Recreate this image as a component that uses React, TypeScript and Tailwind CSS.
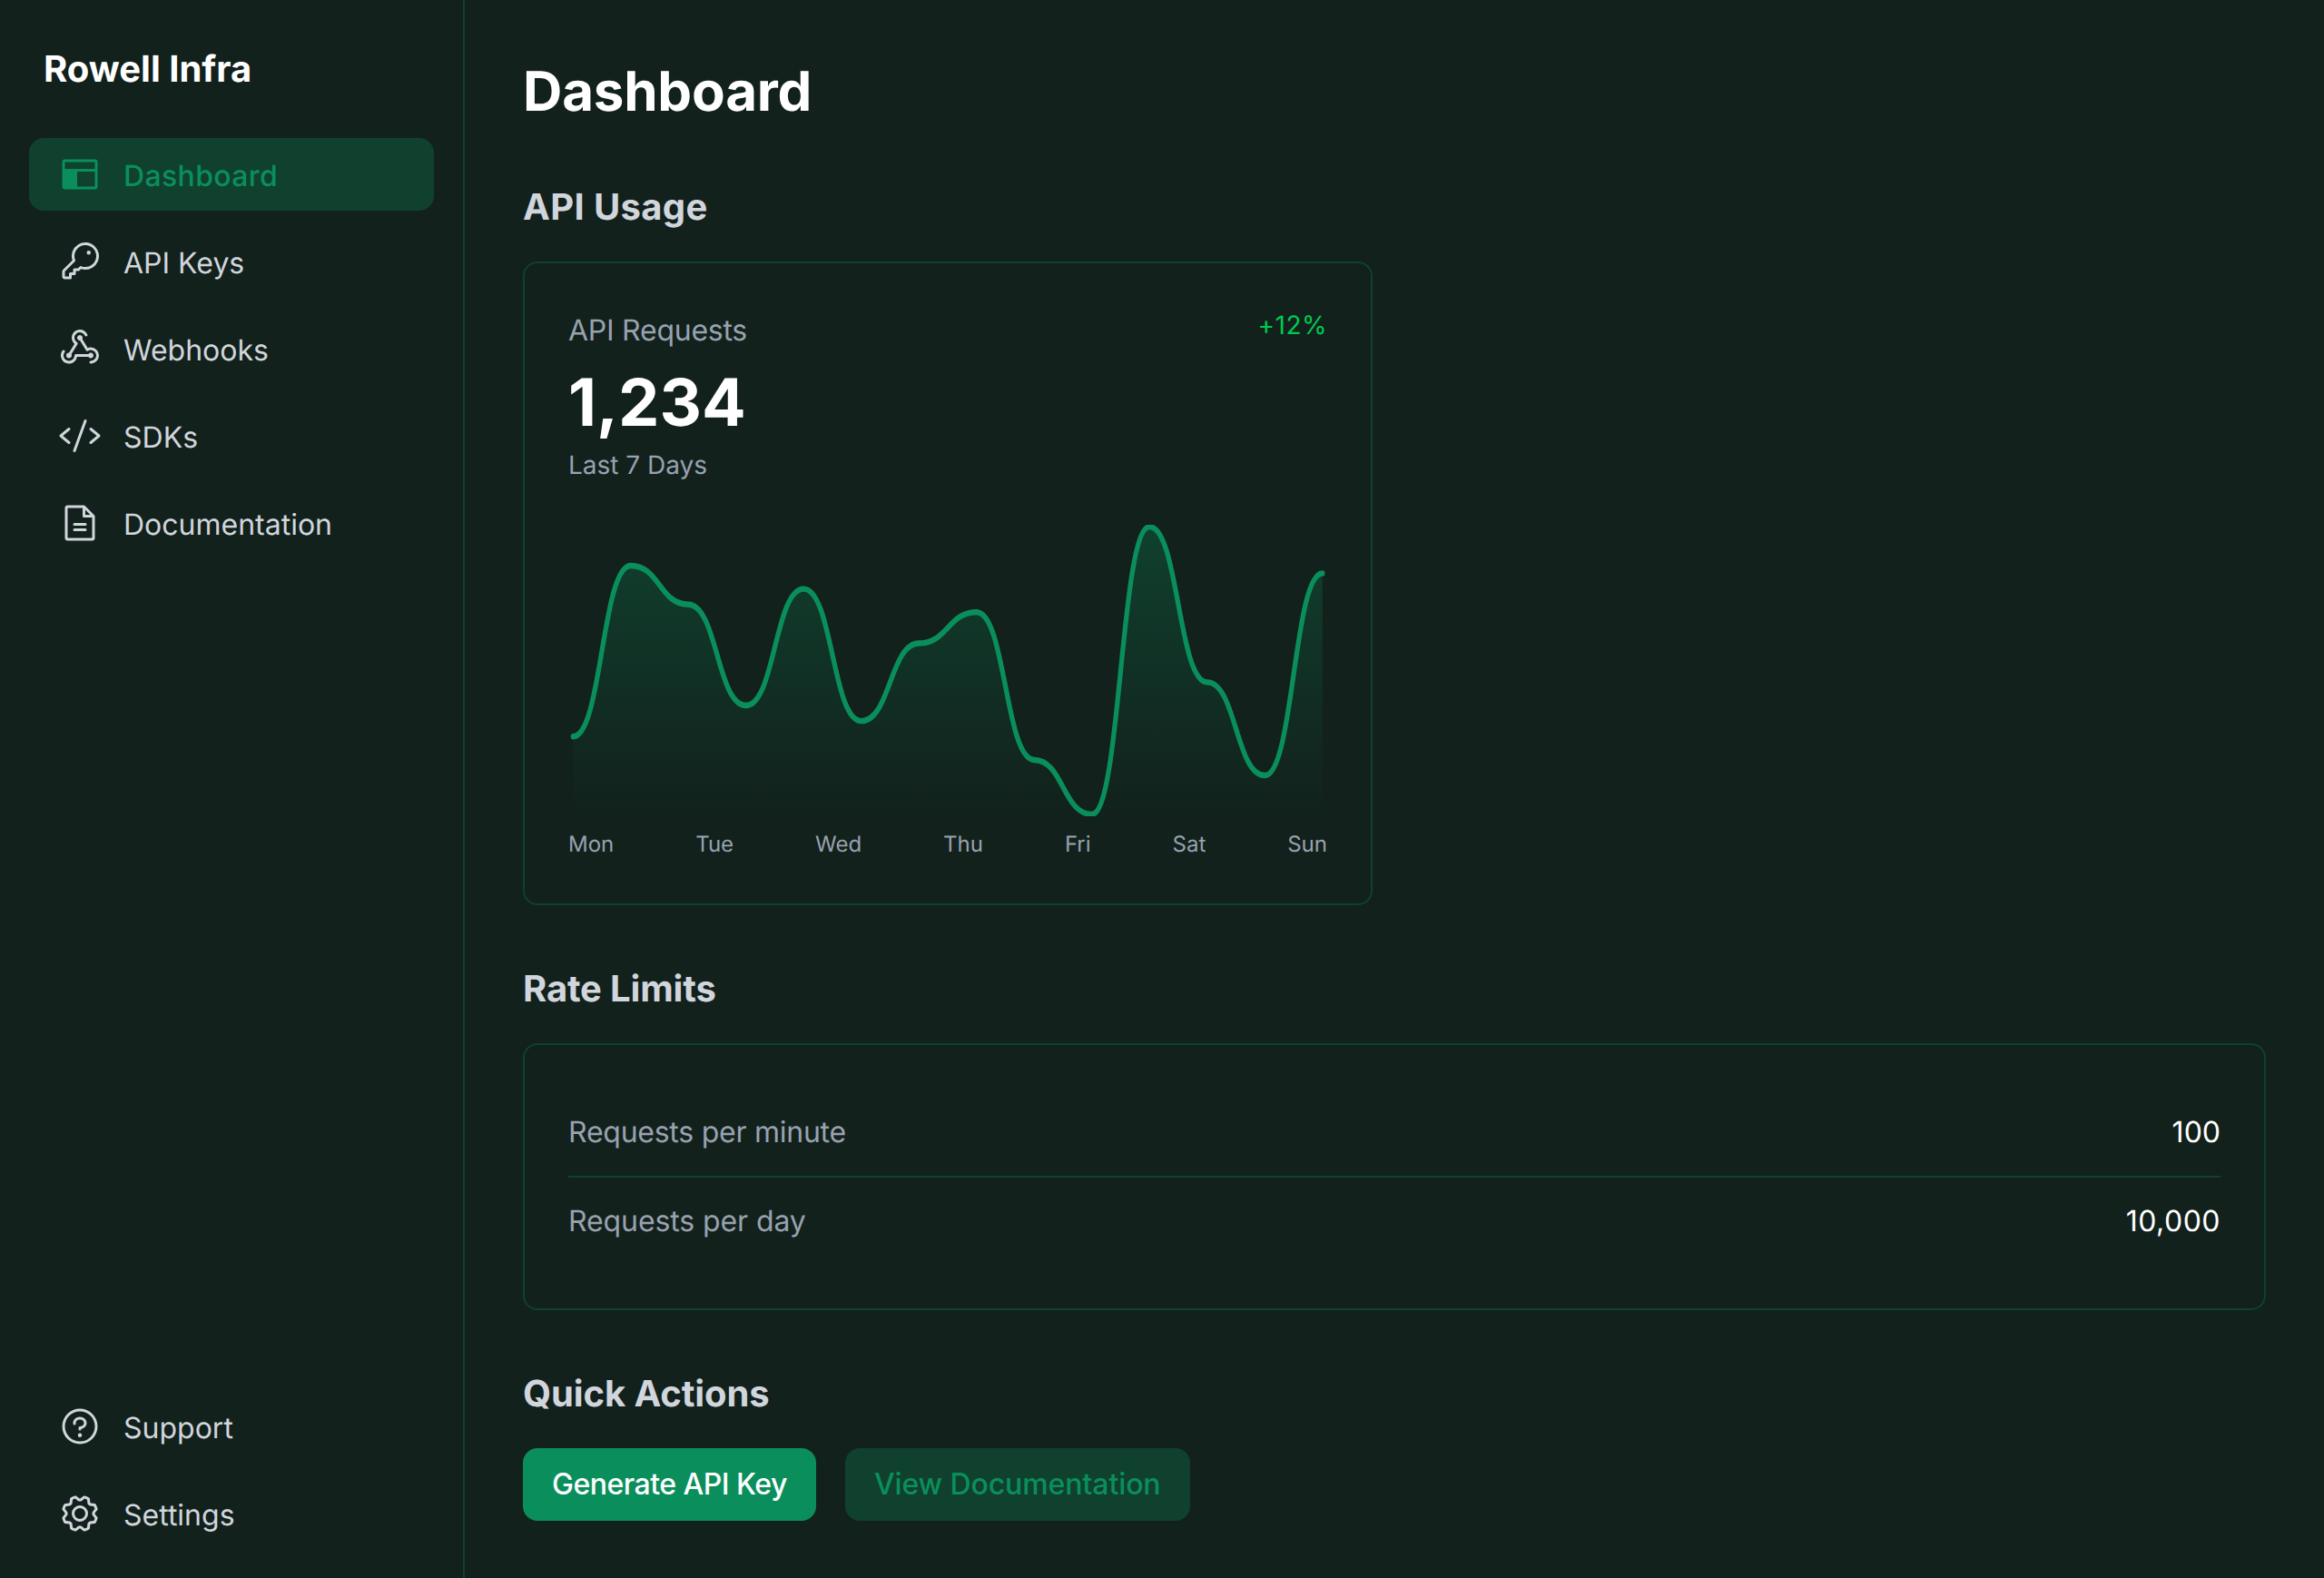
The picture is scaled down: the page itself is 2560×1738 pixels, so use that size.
import {
  PiLayoutFill,
  PiKey,
  PiWebhooksLogo,
  PiCode,
  PiFileText,
  PiQuestion,
  PiGear,
} from "react-icons/pi";

const chartLine =
  "M0 109C18.1538 109 18.1538 21 36.3077 21C54.4615 21 54.4615 41 72.6154 41C90.7692 41 90.7692 93 108.923 93C127.077 93 127.077 33 145.231 33C163.385 33 163.385 101 181.538 101C199.692 101 199.692 61 217.846 61C236 61 236 45 254.154 45C272.308 45 272.308 121 290.462 121C308.615 121 308.615 149 326.769 149C344.923 149 344.923 1 363.077 1C381.231 1 381.231 81 399.385 81C417.538 81 417.538 129 435.692 129C453.846 129 453.846 25 472 25";

const navTop = [
  { label: "API Keys", icon: PiKey },
  { label: "Webhooks", icon: PiWebhooksLogo },
  { label: "SDKs", icon: PiCode },
  { label: "Documentation", icon: PiFileText },
];

const days = ["Mon", "Tue", "Wed", "Thu", "Fri", "Sat", "Sun"];

const NavItem = ({ label, icon: Icon }: { label: string; icon: typeof PiKey }) => (
  <a className="flex h-20 items-center gap-6 rounded-2xl px-8 text-[32px] text-gray-300">
    <Icon size={48} />
    <span className="pt-[3px]">{label}</span>
  </a>
);

const App = () => {
  return (
    <div className="flex min-h-screen bg-[#12211c] font-['Inter',sans-serif] [text-rendering:geometricPrecision]">
      {/* Sidebar */}
      <aside className="flex w-[512px] shrink-0 flex-col justify-between border-r-2 border-[#10402e] p-8">
        <div>
          <h1 className="px-4 py-4 text-[40px] leading-[56px] font-bold text-white">
            Rowell Infra
          </h1>
          <nav className="mt-8 flex flex-col gap-4">
            <a className="flex h-20 items-center gap-6 rounded-2xl bg-[#10402e] px-8 text-[32px] font-medium tracking-[0.35px] text-[#0a8f5c]">
              <PiLayoutFill size={48} />
              <span className="pt-[3px]">Dashboard</span>
            </a>
            {navTop.map((item) => (
              <NavItem key={item.label} label={item.label} icon={item.icon} />
            ))}
          </nav>
        </div>
        <div className="flex flex-col gap-4">
          <NavItem label="Support" icon={PiQuestion} />
          <NavItem label="Settings" icon={PiGear} />
        </div>
      </aside>

      {/* Main */}
      <main className="flex-1 overflow-hidden p-16">
        <h2 className="pt-[2px] pb-0 text-[60px] leading-[70px] font-bold tracking-[-0.2px] text-white">
          Dashboard
        </h2>

        <h3 className="mt-16 text-[40px] leading-[56px] font-bold tracking-[0.35px] text-gray-300">
          API Usage
        </h3>
        <section className="mt-8 w-[936px] rounded-2xl border-2 border-[#10402e] p-12">
          <div className="flex items-start justify-between">
            <div>
              <p className="pt-0.5 text-[32px] leading-[48px] tracking-[-0.25px] text-gray-400">API Requests</p>
              <p className="mt-4 text-[72px] leading-[80px] font-bold text-white">1,234</p>
              <p className="mt-2 text-[28px] leading-[40px] text-gray-400">Last 7 Days</p>
            </div>
            <span className="text-[28px] leading-[40px] tracking-[0.5px] text-green-500">+12%</span>
          </div>
          <svg
            className="mt-[46px] h-[321px] w-full"
            viewBox="-3 0 478 150"
            preserveAspectRatio="none"
            fill="none"
          >
            <defs>
              <linearGradient id="usageFill" x1="236" x2="236" y1="1" y2="149" gradientUnits="userSpaceOnUse">
                <stop stopColor="#10402e" />
                <stop offset="1" stopColor="#10402e" stopOpacity="0" />
              </linearGradient>
            </defs>
            <path d={`${chartLine}V149H0V109Z`} fill="url(#usageFill)" />
            <path d={chartLine} stroke="#0a8f5c" strokeWidth="3" strokeLinecap="round" />
          </svg>
          <div className="mt-[13px] flex justify-between text-[24px] leading-[35px] text-gray-400">
            {days.map((d) => (
              <span key={d}>{d}</span>
            ))}
          </div>
        </section>

        <h3 className="mt-16 text-[40px] leading-[56px] font-bold tracking-[-0.15px] text-gray-300">
          Rate Limits
        </h3>
        <section className="mt-8 rounded-2xl border-2 border-[#10402e] p-12">
          <div className="flex items-center justify-between border-b-2 border-[#10402e] py-6 text-[32px] leading-[48px]">
            <span className="tracking-[-0.25px] text-gray-400">Requests per minute</span>
            <span className="text-white">100</span>
          </div>
          <div className="flex items-center justify-between py-6 text-[32px] leading-[48px]">
            <span className="tracking-[-0.1px] text-gray-400">Requests per day</span>
            <span className="tracking-[0.5px] text-white">10,000</span>
          </div>
        </section>

        <h3 className="mt-16 text-[40px] leading-[56px] font-bold tracking-[-0.1px] text-gray-300">
          Quick Actions
        </h3>
        <div className="mt-8 flex gap-8">
          <button className="h-20 rounded-2xl bg-[#0a8f5c] px-8 text-[32px] font-medium tracking-[-0.5px] text-white">
            Generate API Key
          </button>
          <button className="h-20 rounded-2xl bg-[#10402e] px-8 text-[32px] font-medium tracking-[-0.1px] text-[#0a8f5c]">
            View Documentation
          </button>
        </div>
      </main>
    </div>
  );
};

export default App;
